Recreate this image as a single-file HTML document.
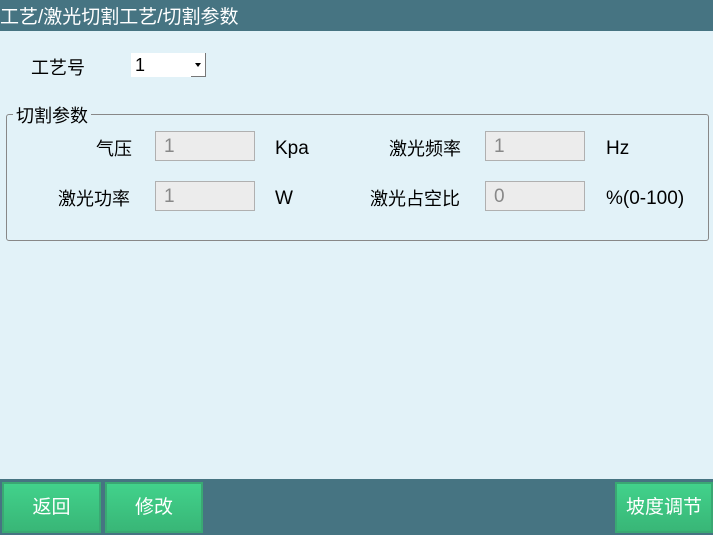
<!DOCTYPE html>
<html><head><style>
body{margin:0;width:713px;height:535px;background:#e2f2f8;font-family:"Liberation Sans","Noto Sans CJK SC",sans-serif;position:relative;overflow:hidden}
.t{position:absolute;white-space:nowrap;font-size:18px;color:#000}
.l{font-size:19px}
.hdr{position:absolute;left:0;top:0;width:713px;height:31px;background:#467482;color:#fff;font-size:19px;line-height:36px}
.in{position:absolute;width:100px;height:30px;background:#ececec;border:1px solid #b0b0b0;box-sizing:border-box;color:#888;font-size:19px;line-height:29px;padding-left:8px}
.bar{position:absolute;left:0;top:479px;width:713px;height:56px;background:#467482}
.btn{position:absolute;top:482px;height:51px;background:linear-gradient(#42d38c,#38b576);color:#fff;font-size:19px;text-align:center;line-height:51px;box-shadow:inset 0 0 0 2px #3aa873}
</style></head><body>
<div class="hdr">工艺/激光切割工艺/切割参数</div>
<div class="t" style="left:31px;top:54px">工艺号</div>
<div style="position:absolute;left:131px;top:53px;width:74px;height:24px;background:#fff"></div>
<div class="t" style="left:135px;top:55px">1</div>
<div style="position:absolute;left:191px;top:53px;width:15px;height:24px;border-right:1px solid #777;border-bottom:1px solid #777;box-sizing:border-box"></div>
<div style="position:absolute;left:195px;top:63px;border-left:3px solid transparent;border-right:3px solid transparent;border-top:4px solid #000"></div>
<div style="position:absolute;left:6px;top:114px;width:703px;height:127px;border:1px solid #888;border-radius:3px;box-sizing:border-box"></div>
<div class="t" style="left:13px;top:102px;background:#e2f2f8;padding:0 3px">切割参数</div>
<div class="t" style="left:96px;top:135px">气压</div>
<div class="in" style="left:155px;top:131px">1</div>
<div class="t l" style="left:275px;top:138px">Kpa</div>
<div class="t" style="left:389px;top:135px">激光频率</div>
<div class="in" style="left:485px;top:131px">1</div>
<div class="t l" style="left:606px;top:138px">Hz</div>
<div class="t" style="left:58px;top:185px">激光功率</div>
<div class="in" style="left:155px;top:181px">1</div>
<div class="t l" style="left:275px;top:188px">W</div>
<div class="t" style="left:370px;top:185px">激光占空比</div>
<div class="in" style="left:485px;top:181px">0</div>
<div class="t l" style="left:606px;top:188px">%(0-100)</div>
<div class="bar"></div>
<div class="btn" style="left:2px;width:99px">返回</div>
<div class="btn" style="left:105px;width:98px">修改</div>
<div class="btn" style="left:615px;width:98px">坡度调节</div>
</body></html>
